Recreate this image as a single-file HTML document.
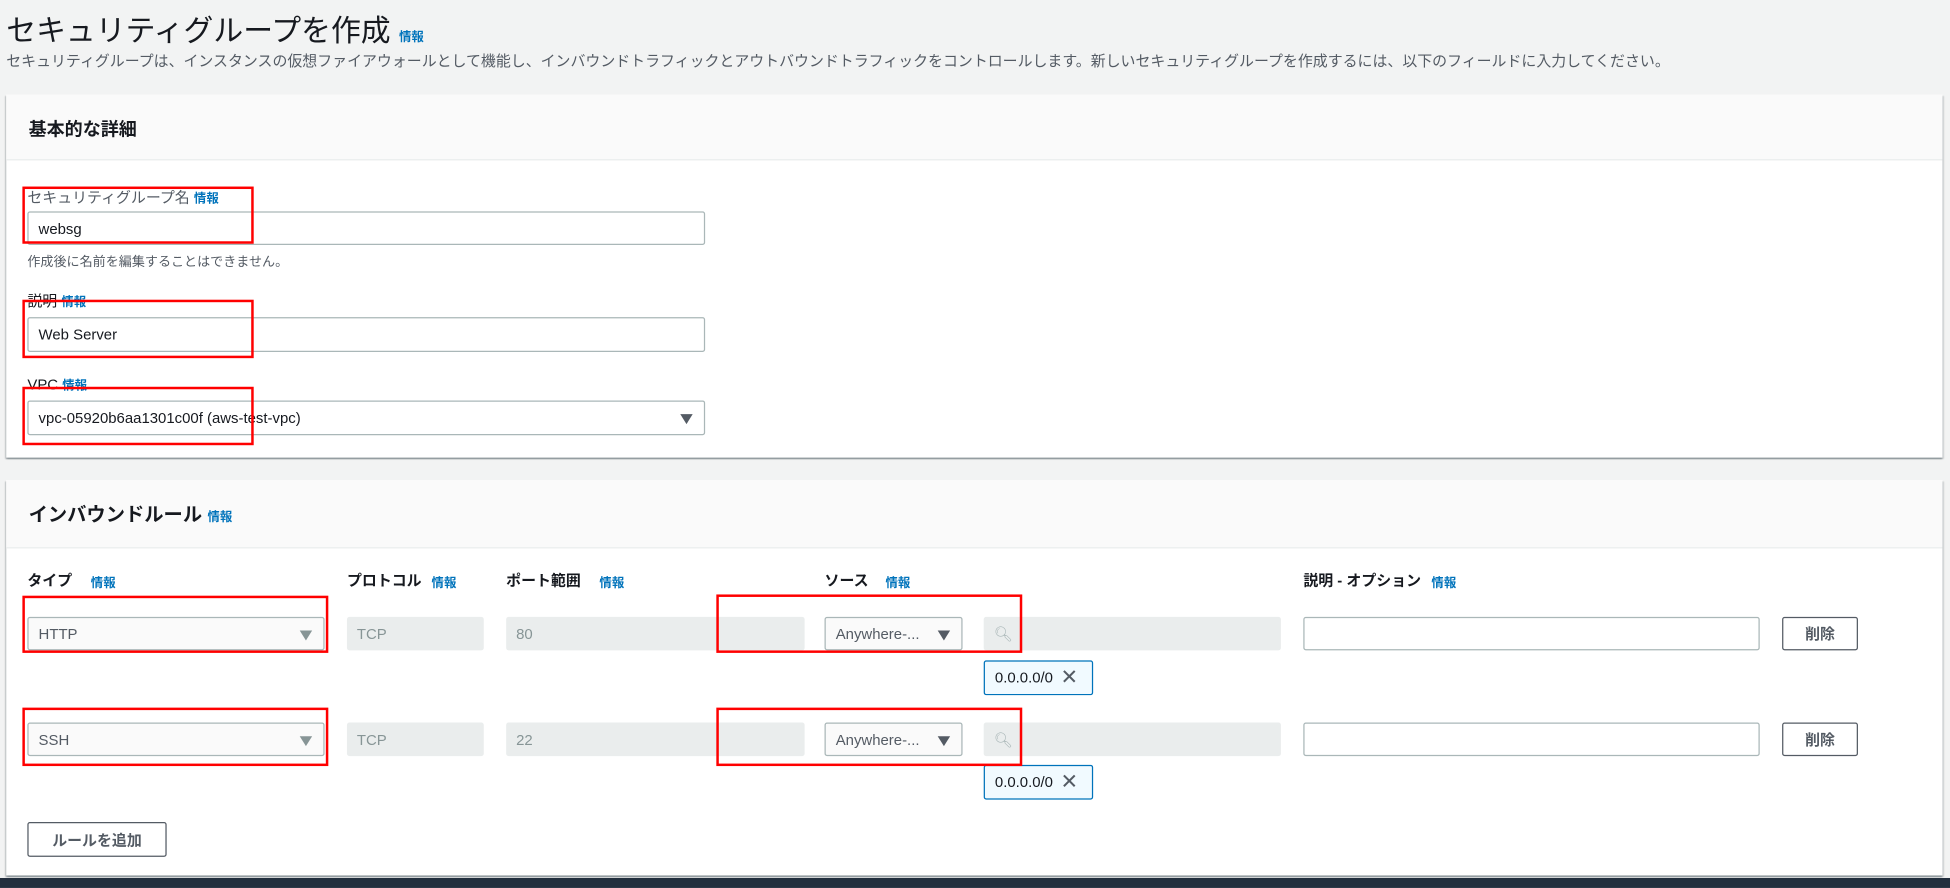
<!DOCTYPE html>
<html><head><meta charset="utf-8"><style>
html,body{margin:0;padding:0;width:1950px;height:886px;overflow:hidden;background:#f2f3f3;}
#w{position:absolute;left:0;top:0;width:1568px;height:713px;transform:scale(1.24362);transform-origin:0 0;font-family:"Liberation Sans","Noto Sans CJK JP",sans-serif;color:#16191f;}
.a{position:absolute;white-space:nowrap;}
.i{color:#0073bb;font-size:10px;font-weight:bold;}
.panel{position:absolute;background:#fff;box-shadow:0 1px 1px rgba(0,28,36,.3),1px 1px 1px rgba(0,28,36,.15),-1px 1px 1px rgba(0,28,36,.15);}
.ph{position:absolute;left:0;right:0;top:0;background:#fafafa;border-bottom:1px solid #eaeded;}
.inp{position:absolute;box-sizing:border-box;border:1px solid #aab7b8;border-radius:2px;background:#fff;font-size:12px;color:#16191f;padding-left:8px;display:flex;align-items:center;}
.sel{background:#fafafa;color:#545b64;}
.dis{position:absolute;box-sizing:border-box;background:#eaeded;border-radius:2px;font-size:12px;color:#879596;padding-left:8px;display:flex;align-items:center;}
.tri{position:absolute;right:9px;top:50%;margin-top:-3px;width:0;height:0;border-left:5px solid transparent;border-right:5px solid transparent;border-top:8px solid #545b64;}
.lab{font-size:12px;font-weight:bold;}
.red{position:absolute;box-sizing:border-box;border:2px solid #f00;}
.chip{position:absolute;box-sizing:border-box;border:1px solid #0073bb;background:#f1faff;border-radius:2px;font-size:12px;display:flex;align-items:center;padding-left:8px;}
.btn{position:absolute;box-sizing:border-box;border:1px solid #545b64;border-radius:2px;background:#fff;font-size:12px;font-weight:bold;color:#545b64;display:flex;align-items:center;justify-content:center;}
</style></head><body><div id="w">
<div class="a" style="left:5px;top:5px;font-size:24px;color:#16191f">セキュリティグループを作成 <span class="i">情報</span></div>
<div class="a" style="left:5px;top:40px;font-size:12px;color:#545b64">セキュリティグループは、インスタンスの仮想ファイアウォールとして機能し、インバウンドトラフィックとアウトバウンドトラフィックをコントロールします。新しいセキュリティグループを作成するには、以下のフィールドに入力してください。</div>

<div class="panel" style="left:5px;top:76px;width:1557px;height:292px;">
 <div class="ph" style="height:52px"></div>
 <div class="a" style="left:18px;top:17px;font-size:14.5px;font-weight:bold">基本的な詳細</div>
</div>
<div class="a" style="left:22px;top:150px;font-size:12px;color:#545b64">セキュリティグループ名 <span class="i">情報</span></div>
<div class="inp" style="left:22px;top:170px;width:545px;height:27px">websg</div>
<div class="a" style="left:22px;top:203px;font-size:10.5px;color:#545b64">作成後に名前を編集することはできません。</div>
<div class="a" style="left:22px;top:233px;font-size:12px;color:#16191f">説明 <span class="i">情報</span></div>
<div class="inp" style="left:22px;top:255px;width:545px;height:28px">Web Server</div>
<div class="a" style="left:22px;top:301px;font-size:12px;color:#16191f">VPC <span class="i">情報</span></div>
<div class="inp" style="left:22px;top:322px;width:545px;height:28px">vpc-05920b6aa1301c00f (aws-test-vpc)<div class="tri"></div></div>

<div class="panel" style="left:5px;top:386px;width:1557px;height:318px;">
 <div class="ph" style="height:54px"></div>
 <div class="a" style="left:18px;top:16px;font-size:15.5px;font-weight:bold">インバウンドルール <span class="i">情報</span></div>
</div>
<div class="a lab" style="left:22px;top:458px">タイプ</div><div class="a i" style="left:73px;top:460px">情報</div>
<div class="a lab" style="left:279px;top:458px">プロトコル</div><div class="a i" style="left:347px;top:460px">情報</div>
<div class="a lab" style="left:407px;top:458px">ポート範囲</div><div class="a i" style="left:482px;top:460px">情報</div>
<div class="a lab" style="left:663px;top:458px">ソース</div><div class="a i" style="left:712px;top:460px">情報</div>
<div class="a lab" style="left:1048px;top:458px">説明 - オプション</div><div class="a i" style="left:1151px;top:460px">情報</div>

<div class="inp sel" style="left:22px;top:496px;width:239px;height:27px">HTTP<div class="tri" style="border-top-color:#879596"></div></div>
<div class="dis" style="left:279px;top:496px;width:110px;height:27px">TCP</div>
<div class="dis" style="left:407px;top:496px;width:240px;height:27px">80</div>
<div class="inp sel" style="left:663px;top:496px;width:111px;height:27px">Anywhere-...<div class="tri"></div></div>
<div class="dis" style="left:791px;top:496px;width:239px;height:27px;color:#aab7b8">&#x1F50D;&#xFE0E;</div>
<div class="inp" style="left:1048px;top:496px;width:367px;height:27px"></div>
<div class="btn" style="left:1433px;top:496px;width:61px;height:27px">削除</div>
<div class="chip" style="left:791px;top:531px;width:88px;height:28px">0.0.0.0/0 <span style="font-size:17px;margin-left:6px;color:#545b64">✕</span></div>

<div class="inp sel" style="left:22px;top:581px;width:239px;height:27px">SSH<div class="tri" style="border-top-color:#879596"></div></div>
<div class="dis" style="left:279px;top:581px;width:110px;height:27px">TCP</div>
<div class="dis" style="left:407px;top:581px;width:240px;height:27px">22</div>
<div class="inp sel" style="left:663px;top:581px;width:111px;height:27px">Anywhere-...<div class="tri"></div></div>
<div class="dis" style="left:791px;top:581px;width:239px;height:27px;color:#aab7b8">&#x1F50D;&#xFE0E;</div>
<div class="inp" style="left:1048px;top:581px;width:367px;height:27px"></div>
<div class="btn" style="left:1433px;top:581px;width:61px;height:27px">削除</div>
<div class="chip" style="left:791px;top:615px;width:88px;height:28px">0.0.0.0/0 <span style="font-size:17px;margin-left:6px;color:#545b64">✕</span></div>

<div class="btn" style="left:22px;top:661px;width:112px;height:28px">ルールを追加</div>

<div class="red" style="left:18px;top:150px;width:186px;height:46px"></div>
<div class="red" style="left:18px;top:241px;width:186px;height:47px"></div>
<div class="red" style="left:18px;top:311px;width:186px;height:47px"></div>
<div class="red" style="left:18px;top:479px;width:246px;height:46px"></div>
<div class="red" style="left:576px;top:478px;width:246px;height:47px"></div>
<div class="red" style="left:18px;top:569px;width:246px;height:47px"></div>
<div class="red" style="left:576px;top:569px;width:246px;height:47px"></div>

<div class="a" style="left:0;top:706px;width:1568px;height:8px;background:#232f3e"></div>
</div></body></html>
